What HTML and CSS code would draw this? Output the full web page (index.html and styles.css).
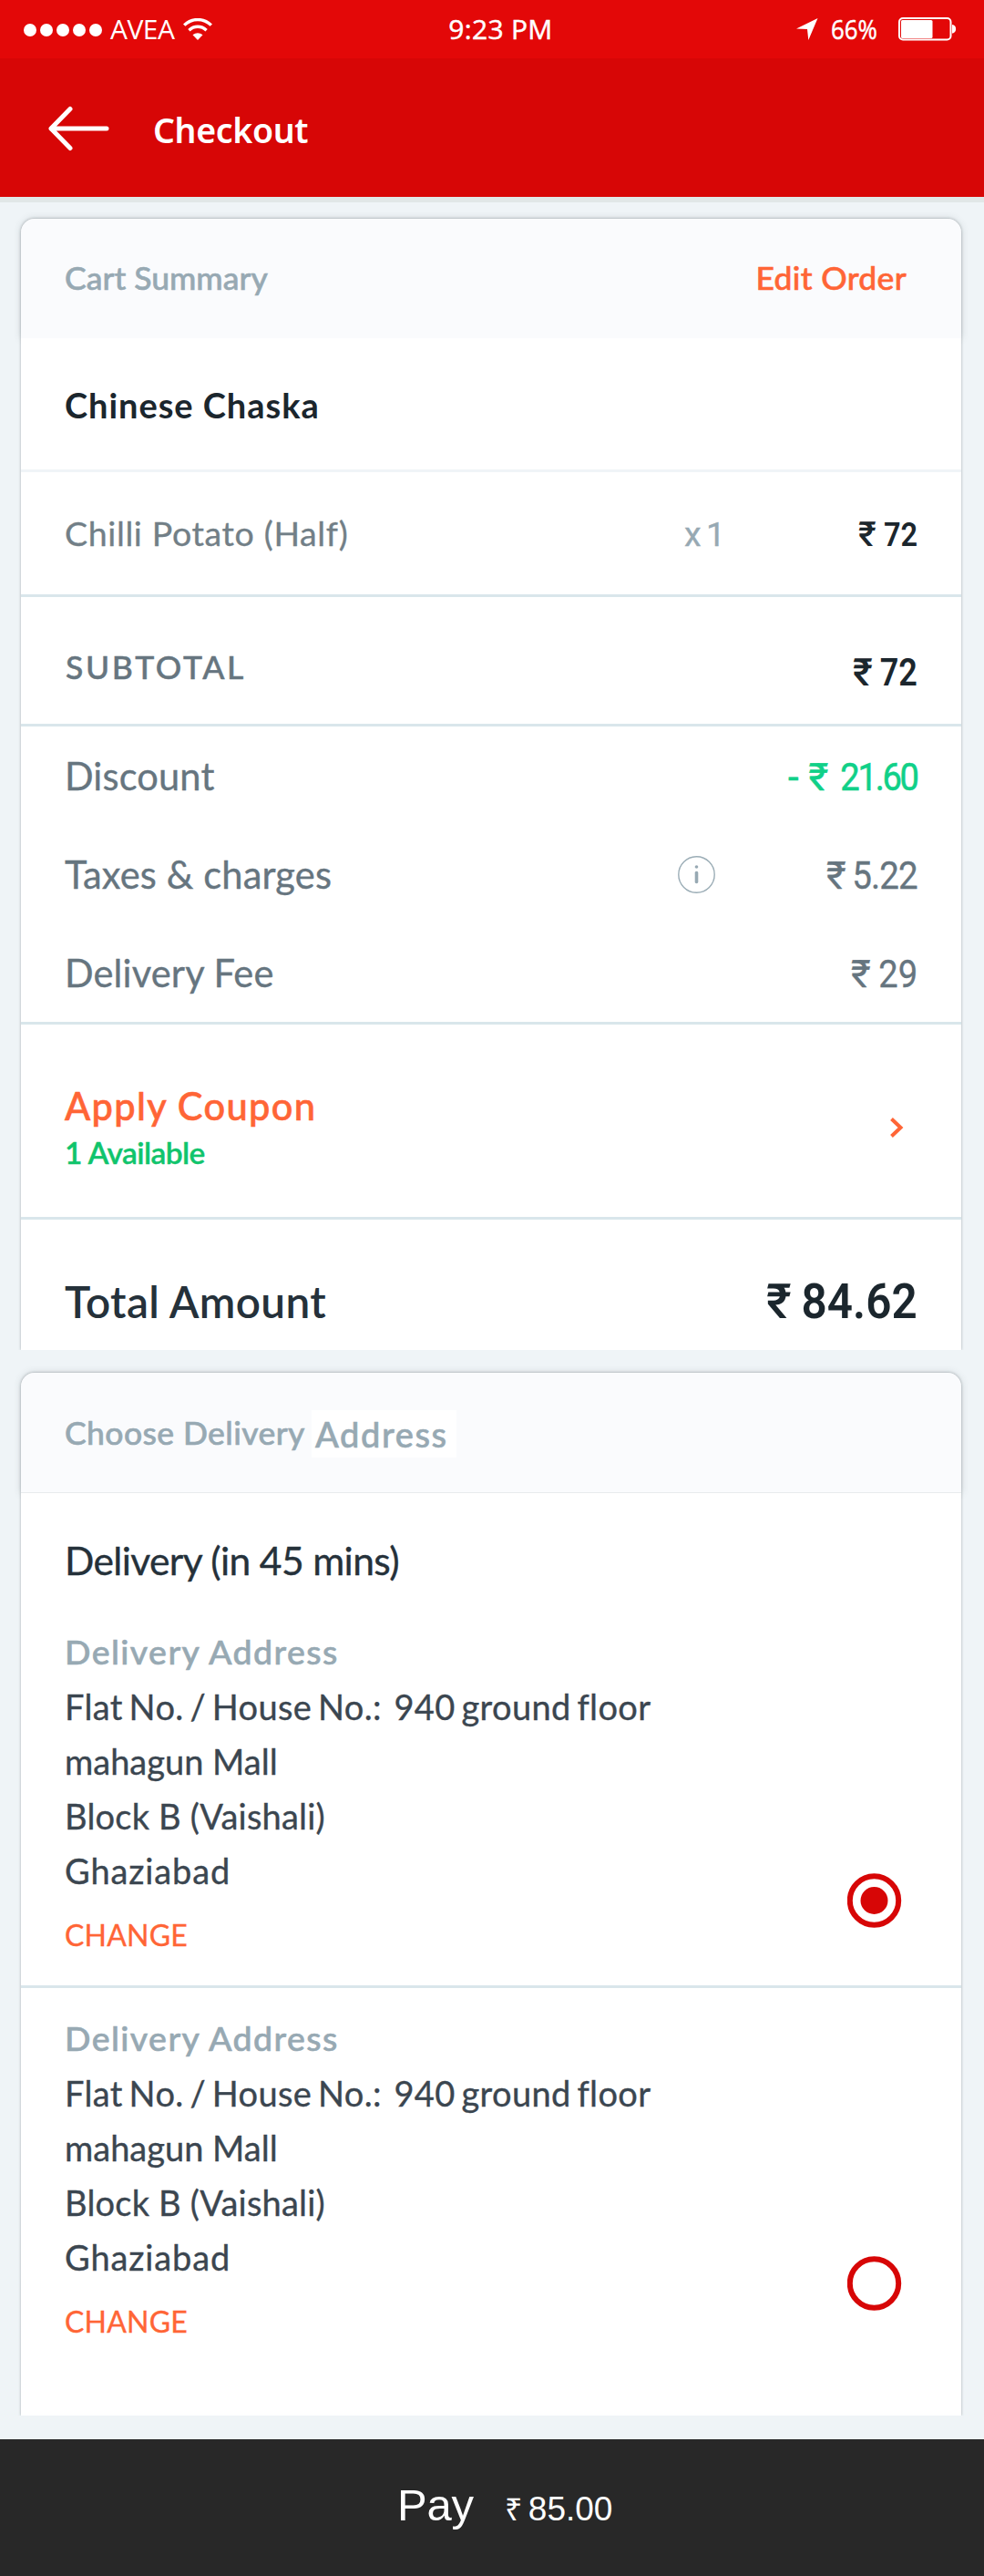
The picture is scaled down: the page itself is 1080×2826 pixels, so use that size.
FILE: index.html
```html
<!DOCTYPE html>
<html lang="en">
<head>
<meta charset="utf-8">
<title>Checkout</title>
<link rel="stylesheet" href="styles.css">
</head>
<body>
<div class="status">
  <div class="status-left">
    <svg class="signal" width="88" height="14" viewBox="0 0 88 14"><g fill="#fff"><circle cx="7" cy="7" r="7"/><circle cx="25" cy="7" r="7"/><circle cx="43" cy="7" r="7"/><circle cx="61" cy="7" r="7"/><circle cx="79" cy="7" r="7"/></g></svg>
    <span class="carrier">AVEA</span>
    <svg class="wifi" width="32" height="24" viewBox="0 0 32 24"><g fill="none" stroke="#fff" stroke-width="3.4"><path d="M1.2 7.6C9.500 -0.500 22.500 -0.500 30.800 7.600"/><path d="M6.400 13.200C12 8 20 8 25.600 13.200"/></g><path d="M10.500 18.300C14 15.600 18 15.600 21.500 18.300L16 24Z" fill="#fff"/></svg>
  </div>
  <span class="clock">9:23 PM</span>
  <div class="status-right">
    <svg width="24" height="24" viewBox="0 0 24 24"><path d="M0 11.500L23.500 0L13.300 24L12 12Z" fill="#fff"/></svg>
    <span class="percent">66%</span>
    <svg width="64" height="26" viewBox="0 0 64 26"><rect x="1" y="1" width="56.500" height="23.500" rx="4" fill="none" stroke="#fff" stroke-width="2"/><rect x="3" y="3" width="34.500" height="20" rx="1.500" fill="#fff"/><path d="M59 8C64.500 8 64.500 17.500 59 17.500Z" fill="#fff"/></svg>
  </div>
</div>
<header class="appbar">
  <svg width="68" height="50" viewBox="0 0 68 50"><path d="M25 3.500L4 25L25 46.500M4 25H65" fill="none" stroke="#fff" stroke-width="5" stroke-linecap="round" stroke-linejoin="round"/></svg>
  <h1>Checkout</h1>
</header>
<main>
  <section class="card">
    <div class="card-head"><span class="cart-title">Cart Summary</span><a class="edit">Edit Order</a></div>
    <div class="row vendor"><span>Chinese Chaska</span></div>
    <div class="row item"><span class="item-name">Chilli Potato (Half)</span><span class="qty">x 1</span><span class="amount bold small"><i>₹</i><b>72</b></span></div>
    <div class="row subtotal"><span>SUBTOTAL</span><span class="amount bold medium"><i>₹</i><b>72</b></span></div>
    <div class="row fee"><span>Discount</span><span class="amount saving"><i class="dash">-</i><i>₹</i><b>21.60</b></span></div>
    <div class="row fee"><span>Taxes &amp; charges</span>
      <svg class="info" width="41" height="41" viewBox="0 0 41 41"><circle cx="20.500" cy="20.500" r="19.700" fill="none" stroke="#9badb6" stroke-width="1.400"/><circle cx="20.500" cy="12" r="1.800" fill="#97a9b3"/><path d="M20.500 18.500V28.500" stroke="#97a9b3" stroke-width="3.600" stroke-linecap="round"/></svg>
      <span class="amount tax"><i>₹</i><b>5.22</b></span></div>
    <div class="row fee last"><span>Delivery Fee</span><span class="amount shipping"><i>₹</i><b>29</b></span></div>
    <div class="row coupon"><div><div class="apply">Apply Coupon</div><div class="available">1 Available</div></div>
      <svg class="chevron" width="17" height="24" viewBox="0 0 17 24"><path d="M2.500 2.500L12.500 12L2.500 21.500" fill="none" stroke="#ff6536" stroke-width="4"/></svg></div>
    <div class="row total"><span>Total Amount</span><span class="amount bold big"><i>₹</i><b>84.62</b></span></div>
  </section>
  <section class="card">
    <div class="card-head addr-head"><span class="choose">Choose Delivery</span><span class="address-tag">Address</span></div>
    <div class="eta">Delivery (in 45 mins)</div>
    <div class="addr first">
      <div class="lines"><div class="label">Delivery Address</div><div class="flat">Flat No. / House No.:&nbsp; 940 ground floor</div><div>mahagun Mall</div><div class="block">Block B (Vaishali)</div><div class="city">Ghaziabad</div><a class="change">CHANGE</a></div>
      <svg class="radio" width="60" height="60" viewBox="0 0 60 60"><circle cx="29.500" cy="30" r="26.700" fill="none" stroke="#d70606" stroke-width="6"/><circle cx="29.500" cy="30" r="15" fill="#d70606"/></svg>
    </div>
    <div class="addr second">
      <div class="lines"><div class="label">Delivery Address</div><div class="flat">Flat No. / House No.:&nbsp; 940 ground floor</div><div>mahagun Mall</div><div class="block">Block B (Vaishali)</div><div class="city">Ghaziabad</div><a class="change">CHANGE</a></div>
      <svg class="radio" width="60" height="60" viewBox="0 0 60 60"><circle cx="29.500" cy="30" r="26.700" fill="none" stroke="#d70606" stroke-width="6"/></svg>
    </div>
  </section>
</main>
<footer class="pay"><span class="pay-label">Pay</span><span class="pay-rupee">₹</span><span class="pay-sum">85.00</span></footer>
</body>
</html>
```
FILE: styles.css
```css
* { box-sizing: border-box; }
body { margin: 0; width: 1080px; background: #eff4f7; font-family: Lato, sans-serif; color: #66757f; }
svg { display: block; flex: none; }

/* Status bar */
.status { height: 64px; padding: 0 30px 0 26px; background: #e30808; color: #fff; font: 500 30px/64px "Open Sans", sans-serif; display: grid; grid-template-columns: 1fr auto 1fr; align-items: center; }
.status-left, .status-right { display: flex; align-items: center; }
.status-right { justify-content: flex-end; }
.signal { margin-top: 2px; }
.carrier { margin-left: 7px; font-weight: 400; letter-spacing: -.5px; }
.wifi { margin-left: 9px; }
.clock { margin-left: 23px; letter-spacing: .3px; -webkit-text-stroke: .5px; }
.percent { margin: 0 15px 0 14px; transform: scaleX(.86); transform-origin: left; -webkit-text-stroke: .5px; }

/* App bar */
.appbar { height: 158px; padding: 52px 0 0 52px; background: #d70606; border-bottom: 6px solid #e1e7e7; display: flex; color: #fff; }
.appbar h1 { margin: 0 0 0 48px; font: 600 37.500px/50px "Noto Sans", sans-serif; letter-spacing: -.35px; padding-top: 2px; }

main { padding: 18px 25px 26px 23px; display: flex; flex-direction: column; gap: 25px; -webkit-text-stroke: .35px; }
.card { background: #fff; border-radius: 15px 15px 0 0; box-shadow: 0 0 3px rgba(60, 70, 75, .45); clip-path: inset(-12px -12px 0 -12px); line-height: 40px; }
.card-head { height: 131px; padding: 45px 60px 0 48px; background: #fafbfd; border-radius: 15px 15px 0 0; box-shadow: 0 0 9px rgba(60, 70, 75, .18); display: flex; justify-content: space-between; font-size: 35.500px; font-weight: 500; color: #97a9b3; -webkit-text-stroke: .6px; }
.edit { color: #ff6536; letter-spacing: .3px; }

/* Order rows */
.row { padding: 0 48px; display: flex; justify-content: space-between; align-items: baseline; background: #fff; border-bottom: 3px solid #d9e6eb; }
.vendor { height: 147px; padding-top: 53px; font-size: 38px; font-weight: 700; letter-spacing: .95px; color: #1b262d; border-color: #f0f4f7; -webkit-text-stroke: 0; }
.item { height: 137px; padding-top: 47px; font-size: 37.500px; color: #727f87; }
.item-name { flex: 1; letter-spacing: .64px; }
.qty { width: 191px; font-family: Roboto, sans-serif; color: #97a9b3; letter-spacing: -2px; }
.subtotal { height: 142px; padding-top: 57px; padding-left: 49px; align-items: flex-start; font-size: 35.500px; font-weight: 500; letter-spacing: 2.680px; -webkit-text-stroke: .5px; }
.subtotal .amount { margin-top: 6px; }
.amount { display: flex; justify-content: space-between; font: 400 41.900px/40px Roboto, sans-serif; letter-spacing: 0; }
.amount i { font-style: normal; }
.amount b { font-weight: inherit; transform: scaleX(.86); transform-origin: right; }
.bold { font-weight: 600; color: #1b262d; -webkit-text-stroke: 0; }
.bold i { font-weight: 500; }
.small { width: 65px; font-size: 37.800px; }
.medium { width: 71px; }
.big { width: 166px; font-size: 53.200px; }
.big b { transform: scaleX(.93); }
.saving { width: 142px; color: #10d088; -webkit-text-stroke: .6px; }
.saving .dash { margin-right: 11px; }
.saving i + i { margin-right: auto; }
.saving b { letter-spacing: -2.500px; transform: scaleX(.91); }
.tax { width: 100px; }
.tax b { letter-spacing: -1px; transform: scaleX(.92); }
.shipping { width: 73px; }
.shipping b { transform: scaleX(.91); }
.fee { height: 108px; padding-top: 34px; font-size: 41.600px; border: 0; letter-spacing: .15px; }
.last { height: 111px; border-bottom: 3px solid #d9e6eb; }
.info { align-self: flex-start; margin: 0 122px 0 auto; }
.coupon { height: 214px; padding-top: 69px; align-items: flex-start; }
.apply { font-size: 41.600px; font-weight: 500; letter-spacing: 1.300px; color: #ff6536; -webkit-text-stroke: .6px; }
.available { margin-top: 11px; font-size: 33.500px; font-weight: 600; letter-spacing: -.6px; color: #10c46c; }
.chevron { margin: 32px 14px 0 0; }
.total { height: 143px; padding-top: 70px; font-size: 47.700px; font-weight: 600; letter-spacing: .35px; color: #25313a; border: 0; -webkit-text-stroke: 0; }

/* Delivery addresses */
.addr-head { height: 132px; padding-top: 46px; justify-content: flex-start; border-bottom: 1px solid #e8ebed; }
.choose { letter-spacing: .4px; }
.address-tag { width: 159px; height: 52px; margin: -5px 0 0 7px; padding-left: 4px; background: #fff; font-size: 38px; line-height: 52px; letter-spacing: 1.600px; }
.eta { padding: 54px 49px 50px 48px; background: #fff; font-size: 42.600px; letter-spacing: -.65px; color: #25313a; }
.addr { display: flex; justify-content: space-between; padding: 0 65px 0 48px; font-size: 38px; line-height: 60px; color: #3b4650; }
.first { height: 399px; border-bottom: 3px solid #d9e6eb; }
.second { padding-top: 25px; height: 469px; }
.label { font-size: 37.500px; font-weight: 500; letter-spacing: 1.400px; color: #97a9b3; -webkit-text-stroke: .6px; }
.flat { letter-spacing: .36px; word-spacing: -3.300px; }
.block { letter-spacing: .2px; }
.city { letter-spacing: .86px; }
.change { display: block; margin-top: 21px; font-size: 32px; line-height: 40px; letter-spacing: .2px; color: #ff6536; }
.radio { margin-top: 273px; }
.second .radio { margin-top: 269px; }

/* Payment bar */
.pay { height: 150px; background: #282828; color: #fff; display: flex; align-items: baseline; padding: 44px 0 0 436px; font: 37px/56px "Liberation Sans", sans-serif; }
.pay-label { font-size: 49px; letter-spacing: -.2px; }
.pay-rupee { margin-left: 34px; font-size: 34px; }
.pay-sum { margin-left: 7px; }
```
